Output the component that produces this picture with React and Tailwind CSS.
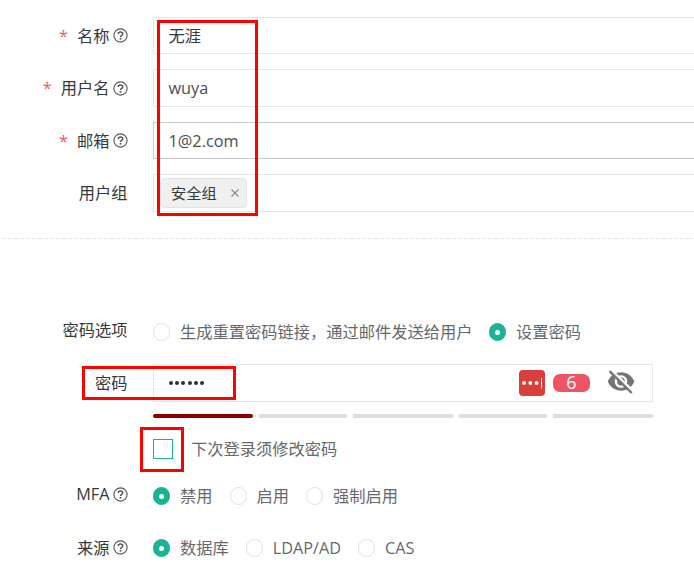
import clsx from 'clsx'

function HelpIcon() {
  return (
    <svg className="w-[15px] h-[15px] ml-[3px] shrink-0" viewBox="0 0 15 15" fill="none" stroke="#555" strokeWidth="1.1">
      <circle cx="7.5" cy="7.5" r="6.6" />
      <path d="M5.2 6c0-1.500 1-2.100 2.300-2.100s2.300.8 2.300 1.900c0 1.500-2.300 1.500-2.300 3.200" strokeWidth="1.500" />
      <path d="M7.500 10v1.600" strokeWidth="1.700" />
    </svg>
  )
}

function Row({ label, required, help, className, labelClass, children }) {
  return (
    <div className={clsx('flex', className)}>
      <div className={clsx('w-[127.5px] mr-[25.5px] shrink-0 flex items-center justify-end text-[#36383b] whitespace-nowrap', labelClass)}>
        {required && <span className="text-[#ed5565] mr-[9px]">*</span>}
        <span>{label}</span>
        {help && <HelpIcon />}
      </div>
      {children}
    </div>
  )
}

function Input({ children, className }) {
  return (
    <div className={clsx('flex-1 flex items-center border border-r-0 border-[#e5e6e7] text-[#4c4d4f] pl-[14.5px]', className)}>
      {children}
    </div>
  )
}

function Radio({ label, checked, className }) {
  return (
    <label className={clsx('flex items-center whitespace-nowrap text-[#66686c]', className)}>
      <span
        className={clsx(
          'w-[17px] h-[18px] rounded-full border mr-[10px] shrink-0 flex items-center justify-center',
          checked ? 'bg-[#1ab394] border-[#1ab394]' : 'bg-white border-[#dcdfe6]'
        )}
      >
        {checked && <span className="w-[5px] h-[5px] rounded-full bg-white" />}
      </span>
      {label}
    </label>
  )
}

function HiddenEye() {
  return (
    <svg className="w-[28px] h-[24px]" viewBox="0 0 28 24">
      <path d="M.8 11.500C3 6 8 2.300 14 2.300S25 6 27.400 11.500C25 17 20 20.700 14 20.700S3 17 .8 11.500Z" fill="#757575" />
      <circle cx="14" cy="11.500" r="6.300" fill="#fff" />
      <circle cx="14" cy="11.500" r="3.900" fill="#757575" />
      <path d="M4.300.1 26.300 21.300" stroke="#fff" strokeWidth="2.500" />
      <path d="M2.500 1.200 24.700 23" stroke="#757575" strokeWidth="2.400" />
    </svg>
  )
}

const strength = ['w-[100px] rounded-full bg-[#8b0000]', 'w-[88px] bg-[#ddd]', 'w-[100px] bg-[#ddd]', 'w-[88px] bg-[#ddd]', 'w-[100px] rounded-r-full bg-[#ddd]']

export default function App() {
  return (
    <div className="relative w-full h-[577px] overflow-hidden bg-white pt-[17px] font-['Open_Sans','Noto_Sans_CJK_SC',sans-serif] text-[16.25px] leading-[24px]">
      <Row label="名称" required help className="h-[37px] mb-[15px]">
        <Input className="text-[#36383b]">无涯</Input>
      </Row>
      <Row label="用户名" required help className="h-[38px] mb-[15px]">
        <Input>wuya</Input>
      </Row>
      <Row label="邮箱" required help className="h-[37px] mb-[15px]">
        <Input className="border-[#c8cacf]!">1@2.com</Input>
      </Row>
      <Row label="用户组" className="h-[38px]">
        <Input className="pl-[6px]!">
          <span className="h-[30px] w-[87px] flex items-center rounded-[4px] border border-[#e4e4e4] bg-[#f0f0f0] pl-[10px] text-[15.200px] text-[#36383b]">
            安全组
            <svg className="w-[8px] h-[8px] ml-[14px]" viewBox="0 0 8 8" stroke="#8a8a8a" strokeWidth="1.100">
              <path d="M.5.5l7 7M7.500.5l-7 7" />
            </svg>
          </span>
        </Input>
      </Row>

      <div className="mt-[26px] ml-[2px] h-px bg-[repeating-linear-gradient(90deg,#e7eaec_0_4px,transparent_4px_6px)]" />

      <Row label="密码选项" className="mt-[81px] h-[24px]" labelClass="-mt-[4px]">
        <Radio label="生成重置密码链接，通过邮件发送给用户" />
        <Radio label="设置密码" checked className="ml-[16.5px]" />
      </Row>

      <Row label="密码" className="mt-[20px] h-[38px]">
        <div className="w-[500px] flex items-center border border-[#e5e6e7] pl-[15px] pr-[17px]">
          <div className="flex gap-[2.200px]">
            {[0, 1, 2, 3, 4, 5].map((i) => (
              <span key={i} className="w-[4px] h-[4px] rounded-full bg-[#303133]" />
            ))}
          </div>
          <div className="ml-auto flex items-center">
            <svg className="w-[26px] h-[26px]" viewBox="0 0 26 26">
              <rect width="26" height="26" rx="4" fill="#d93f3b" />
              <circle cx="5" cy="13" r="1.900" fill="#fff" />
              <circle cx="11.300" cy="13" r="1.900" fill="#fff" />
              <circle cx="17.600" cy="13" r="1.900" fill="#fff" />
              <path d="M22.500 8v10.500" stroke="#fff" strokeWidth="1" />
            </svg>
            <span className="ml-[8px] w-[37px] h-[18px] rounded-[7px] bg-[#ed5565] text-white text-[18px] leading-[17px] text-center">6</span>
            <span className="ml-[17px] -mt-[3px]">
              <HiddenEye />
            </span>
          </div>
        </div>
      </Row>

      <div className="flex gap-[6px] ml-[153px] mt-[12px]">
        {strength.map((bar, i) => (
          <span key={i} className={clsx('h-[4px]', bar)} />
        ))}
      </div>

      <label className="flex items-center ml-[153px] mt-[19px] h-[24px] text-[#66686c]">
        <span className="w-[20px] h-[20px] border border-[#1ab394] mr-[18px]" />
        下次登录须修改密码
      </label>

      <Row label="MFA" help className="mt-[23px] h-[24px]" labelClass="-mt-[4px]">
        <Radio label="禁用" checked />
        <Radio label="启用" className="ml-[17px]" />
        <Radio label="强制启用" className="ml-[17px]" />
      </Row>
      <Row label="来源" help className="mt-[28px] h-[24px]" labelClass="-mt-[1px]">
        <Radio label="数据库" checked />
        <Radio label="LDAP/AD" className="ml-[17px]" />
        <Radio label="CAS" className="ml-[17px]" />
      </Row>

      {/* red highlight boxes */}
      <div className="absolute left-[157px] top-[20px] w-[101px] h-[196px] border-3 border-[#f00]" />
      <div className="absolute left-[82px] top-[366px] w-[154px] h-[34px] border-3 border-[#f00]" />
      <div className="absolute left-[140px] top-[427px] w-[44px] h-[45px] border-3 border-[#f00]" />
    </div>
  )
}
